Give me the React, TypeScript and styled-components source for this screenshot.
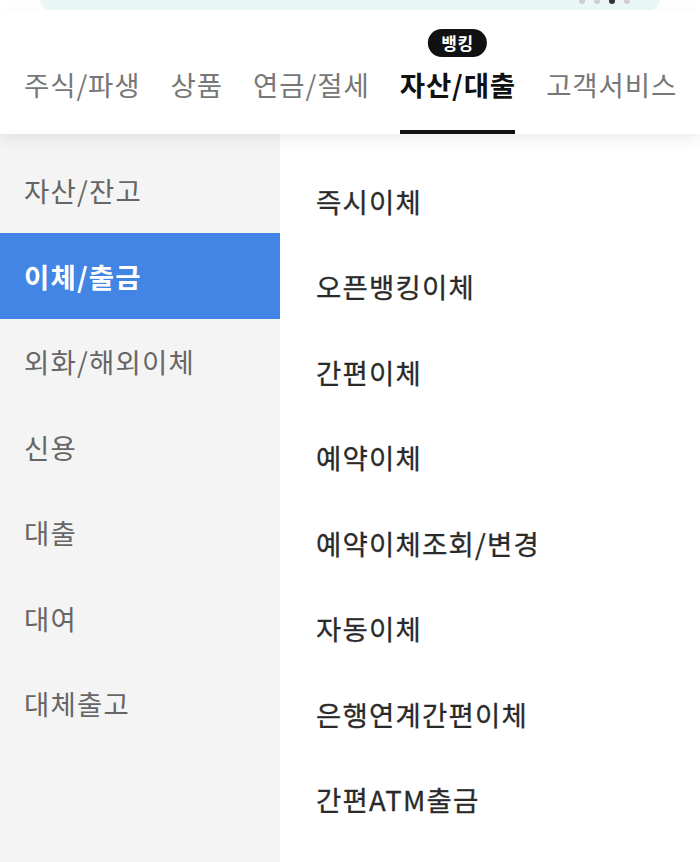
import React from "react";
import styled, { createGlobalStyle } from "styled-components";

const GlobalStyle = createGlobalStyle`
  html, body {
    margin: 0;
    padding: 0;
    background: #ffffff;
  }
  body {
    font-family: "Noto Sans CJK KR", "Noto Sans", sans-serif;
    -webkit-font-smoothing: antialiased;
  }
  * { box-sizing: border-box; }
`;

const Page = styled.div`
  width: 700px;
  min-height: 862px;
  display: flex;
  flex-direction: column;
  overflow: hidden;
`;

const Banner = styled.div`
  margin: 0 40px 0 40px;
  height: 10px;
  background: #eaf7f7;
  border-radius: 0 0 12px 12px;
  display: flex;
  justify-content: flex-end;
  align-items: flex-start;
  padding-right: 30px;
`;

const Dots = styled.div`
  display: flex;
  gap: 9px;
  margin-top: -2px;
`;

const Dot = styled.span<{ $active?: boolean }>`
  width: 6px;
  height: 6px;
  border-radius: 50%;
  background: ${(p) => (p.$active ? "#333333" : "#cfcfcf")};
`;

const TabBar = styled.nav`
  position: relative;
  z-index: 2;
  height: 124px;
  background: #ffffff;
  display: flex;
  align-items: flex-end;
  gap: 31px;
  padding-left: 24px;
  box-shadow: 0 6px 14px rgba(0, 0, 0, 0.07);
`;

const Tab = styled.div<{ $active?: boolean }>`
  position: relative;
  font-size: 27.5px;
  line-height: 36px;
  letter-spacing: 0.9px;
  white-space: nowrap;
  font-weight: ${(p) => (p.$active ? 700 : 400)};
  color: ${(p) => (p.$active ? "#111111" : "#777777")};
  padding-bottom: 28px;
  border-bottom: 4px solid ${(p) => (p.$active ? "#111111" : "transparent")};
`;

const TabLabel = styled.span`
  margin-right: -0.9px;
`;

const Badge = styled.span`
  position: absolute;
  left: 50%;
  bottom: calc(100% + 9px);
  transform: translateX(-50%);
  height: 28px;
  padding: 0 13px;
  border-radius: 14px;
  background: #111111;
  color: #ffffff;
  font-size: 17px;
  font-weight: 700;
  line-height: 28px;
  letter-spacing: 0.5px;
`;

const Body = styled.div`
  flex: 1;
  display: grid;
  grid-template-columns: 280px 1fr;
`;

const SideMenu = styled.ul`
  margin: 0;
  padding: 13.5px 0 0 0;
  list-style: none;
  background: #f4f4f4;
`;

const SideItem = styled.li<{ $active?: boolean }>`
  height: 85.5px;
  display: flex;
  align-items: center;
  padding-left: 24px;
  font-size: 27.5px;
  letter-spacing: 1.2px;
  font-weight: ${(p) => (p.$active ? 700 : 400)};
  color: ${(p) => (p.$active ? "#ffffff" : "#666666")};
  background: ${(p) => (p.$active ? "#4285e5" : "transparent")};
`;

const SubMenu = styled.ul`
  margin: 0;
  padding: 24px 0 0 36px;
  list-style: none;
  background: #ffffff;
`;

const SubItem = styled.li`
  height: 85.5px;
  display: flex;
  align-items: center;
  font-size: 27.5px;
  letter-spacing: 1.2px;
  font-weight: 400;
  color: #2a2a2a;
  -webkit-text-stroke: 0.3px #2a2a2a;
`;

const tabs = ["주식/파생", "상품", "연금/절세", "자산/대출", "고객서비스"];
const sideItems = ["자산/잔고", "이체/출금", "외화/해외이체", "신용", "대출", "대여", "대체출고"];
const subItems = [
  "즉시이체",
  "오픈뱅킹이체",
  "간편이체",
  "예약이체",
  "예약이체조회/변경",
  "자동이체",
  "은행연계간편이체",
  "간편ATM출금",
];

export default function App() {
  return (
    <>
      <GlobalStyle />
      <Page>
        <Banner>
          <Dots>
            <Dot />
            <Dot />
            <Dot $active />
            <Dot />
          </Dots>
        </Banner>
        <TabBar>
          {tabs.map((t) => (
            <Tab key={t} $active={t === "자산/대출"}>
              {t === "자산/대출" && <Badge>뱅킹</Badge>}
              <TabLabel>{t}</TabLabel>
            </Tab>
          ))}
        </TabBar>
        <Body>
          <SideMenu>
            {sideItems.map((s) => (
              <SideItem key={s} $active={s === "이체/출금"}>
                {s}
              </SideItem>
            ))}
          </SideMenu>
          <SubMenu>
            {subItems.map((s) => (
              <SubItem key={s}>{s}</SubItem>
            ))}
          </SubMenu>
        </Body>
      </Page>
    </>
  );
}
